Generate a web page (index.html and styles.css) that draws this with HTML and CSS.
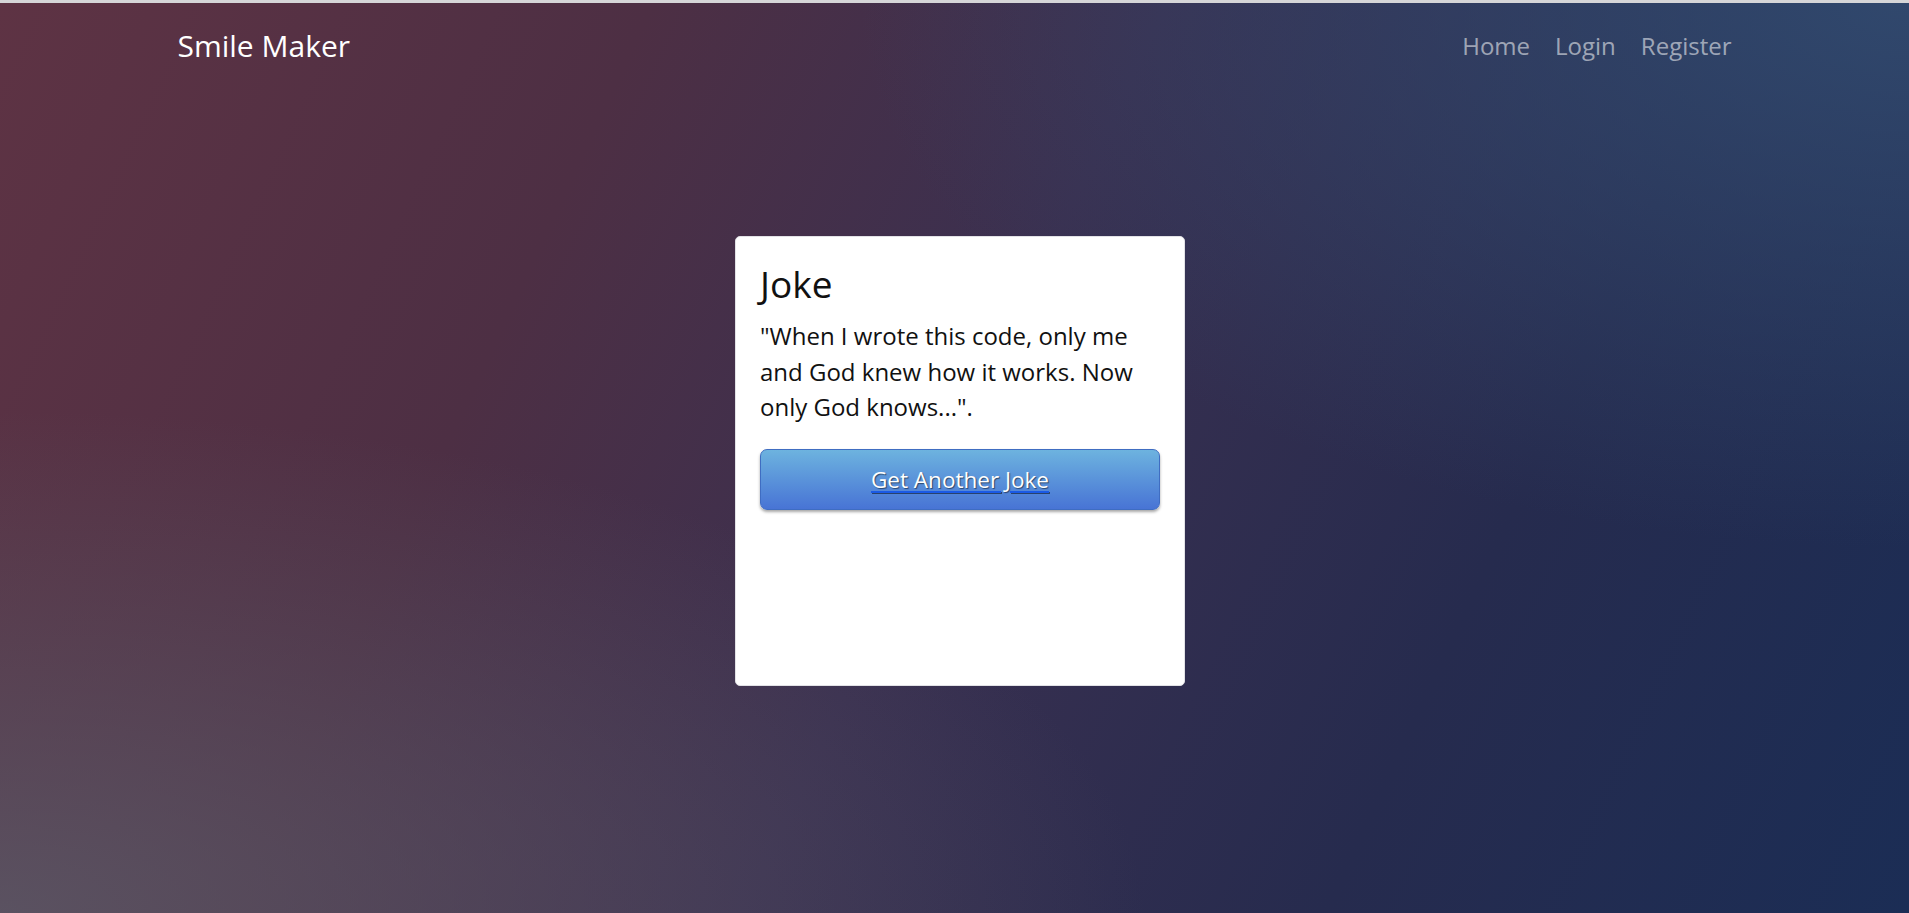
FILE: index.html
```html
<!DOCTYPE html>
<html lang="en">
<head>
<meta charset="utf-8">
<title>Smile Maker</title>
<link rel="stylesheet" href="styles.css">
</head>
<body>
<div class="page">
  <nav class="navbar">
    <a class="brand" href="#">Smile Maker</a>
    <ul class="nav">
      <li><a href="#">Home</a></li>
      <li><a href="#">Login</a></li>
      <li><a href="#">Register</a></li>
    </ul>
  </nav>
  <main class="main">
    <section class="card">
      <h1 class="card-title">Joke</h1>
      <p class="joke">"When I wrote this code, only me and God knew how it works. Now only God knows...".</p>
      <a class="btn-link" href="#"><span class="btn">Get Another Joke</span></a>
    </section>
  </main>
</div>
</body>
</html>
```
FILE: styles.css
```css
html, body {
  margin: 0;
  padding: 0;
  height: 100%;
}
body {
  font-family: "Open Sans", "Noto Sans", sans-serif;
  border-top: 3px solid #d6d6d8;
  box-sizing: border-box;
  background-color: #3a3050;
  background-image:
    radial-gradient(ellipse 60% 55% at 0% 100%, rgba(92, 90, 104, 0.8) 0%, rgba(92, 90, 104, 0) 100%),
    radial-gradient(ellipse 55% 60% at 100% 0%, rgba(50, 75, 112, 0.9) 0%, rgba(50, 75, 112, 0) 100%),
    linear-gradient(115deg, #5e3344 0%, #4d2f44 28%, #3a3050 50%, #262b4e 75%, #1b2d55 100%);
}
.page {
  min-height: 100%;
}
.navbar {
  display: flex;
  align-items: center;
  justify-content: space-between;
  max-width: 1554px;
  margin: 0 auto;
  padding: 21px 0 0;
}
.brand {
  color: #ffffff;
  text-decoration: none;
  font-size: 30px;
  line-height: 44px;
}
.nav {
  display: flex;
  gap: 25px;
  list-style: none;
  margin: 0;
  padding: 0;
}
.nav a {
  color: rgba(255, 255, 255, 0.55);
  text-decoration: none;
  font-size: 24px;
  line-height: 36px;
}
.main {
  display: flex;
  justify-content: center;
  padding: 168px 0 0 11px;
}
.card {
  width: 450px;
  height: 450px;
  box-sizing: border-box;
  background: #ffffff;
  border-radius: 5px;
  border: 1px solid #e2e2e6;
  padding: 25px 24px 23px;
}
.card-title {
  margin: 0;
  font-size: 37px;
  font-weight: 400;
  line-height: 44px;
  color: #111;
}
.joke {
  margin: 12px 0 24px;
  font-size: 24px;
  line-height: 35.5px;
  color: #111;
}
.btn-link {
  display: block;
  text-decoration: none;
}
.btn {
  display: flex;
  align-items: center;
  justify-content: center;
  height: 61px;
  box-sizing: border-box;
  border: 1px solid #3f6dc2;
  border-radius: 7px;
  background: linear-gradient(to bottom, #6db3df 0%, #5a93da 50%, #4874d5 100%);
  box-shadow: 0 2px 3px rgba(0, 0, 0, 0.35);
  color: #ffffff;
  font-size: 22.5px;
  text-decoration: underline;
  text-decoration-color: #1a5ae6;
  text-decoration-thickness: 2px;
  text-underline-offset: 3px;
  text-shadow: 1px 1px 1px rgba(0, 0, 0, 0.5);
}
```
